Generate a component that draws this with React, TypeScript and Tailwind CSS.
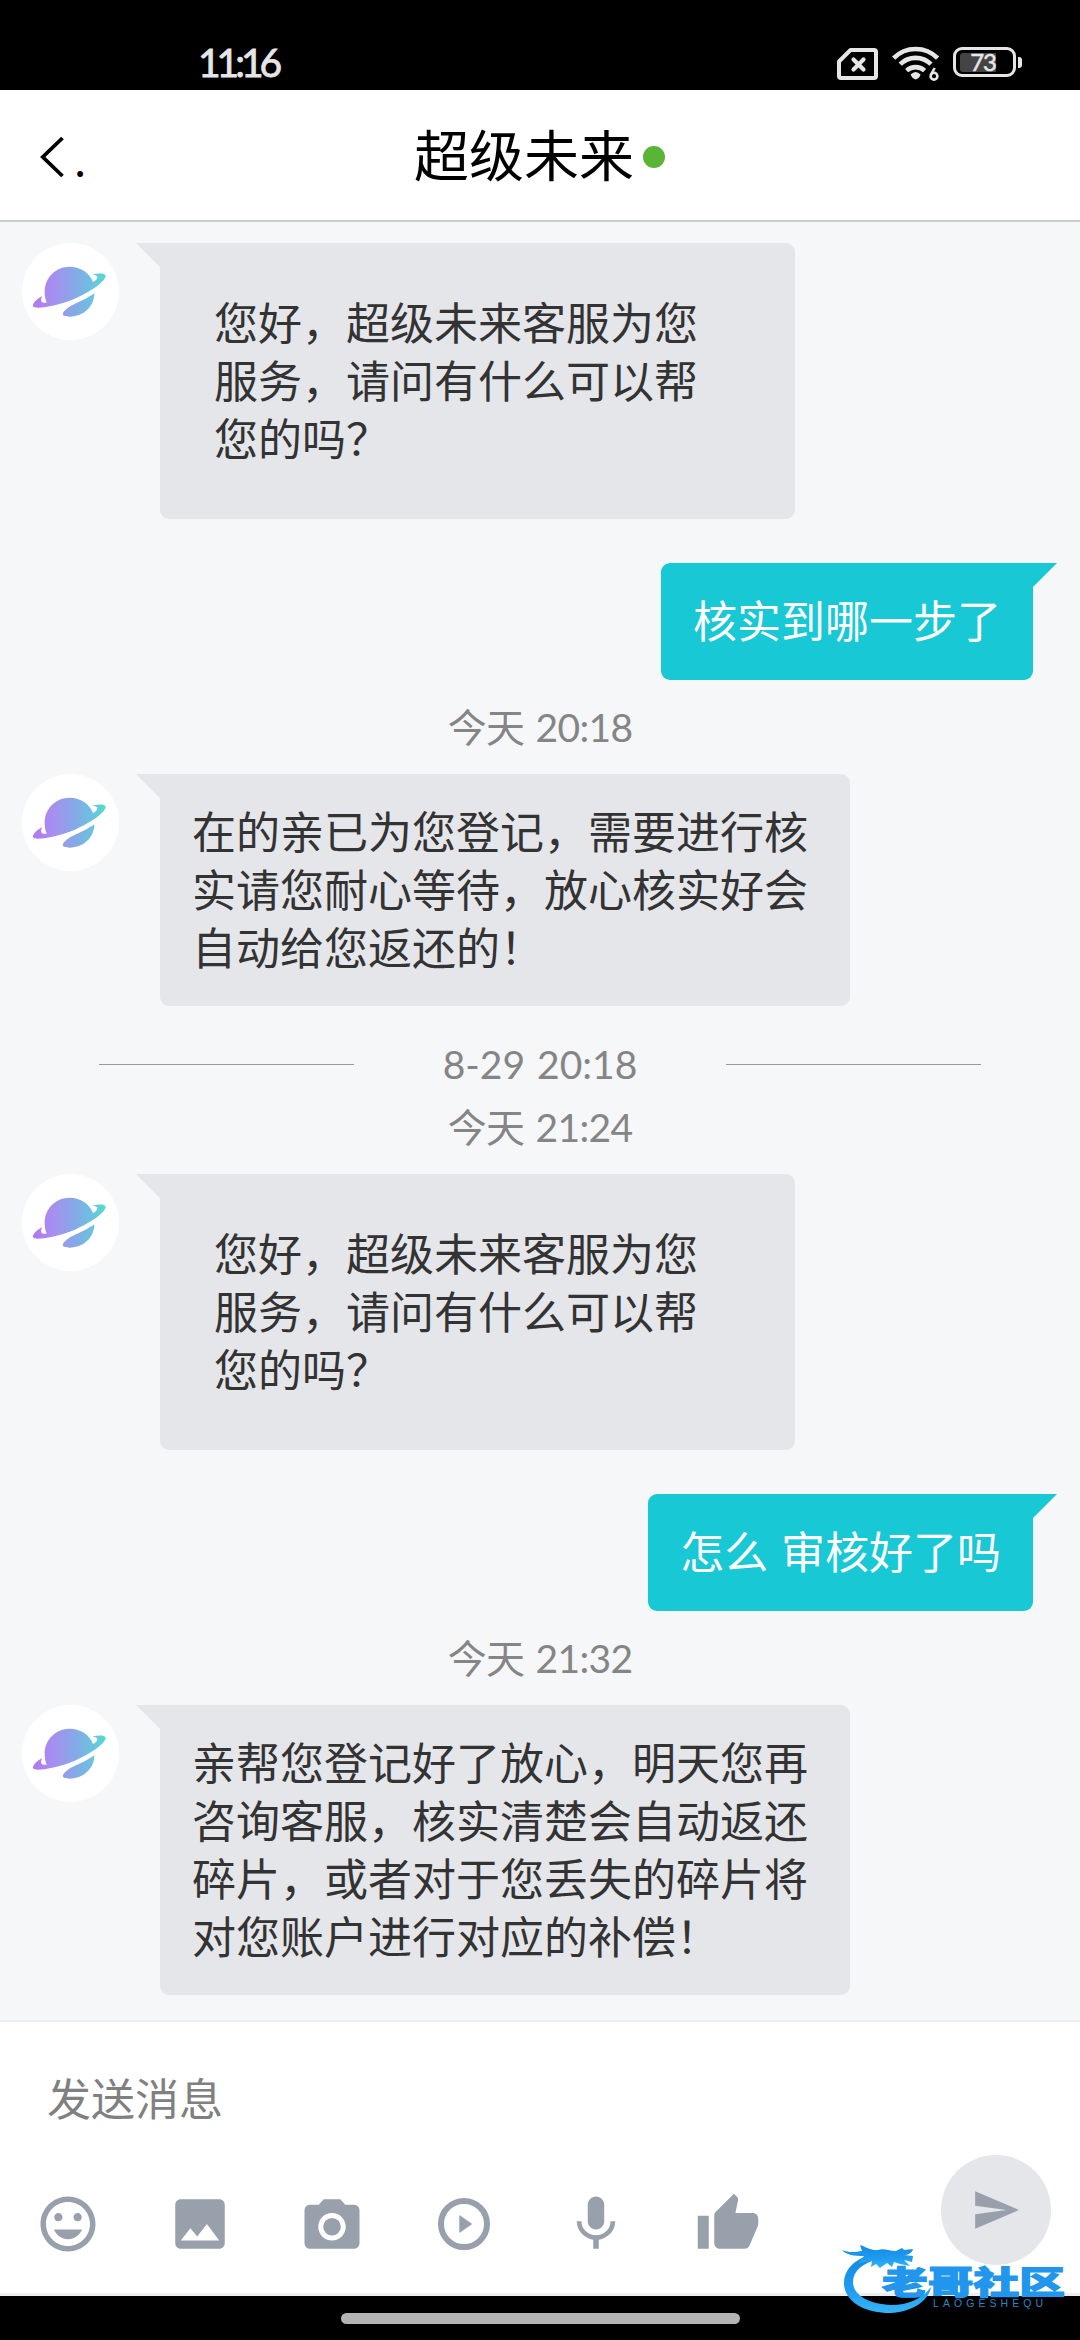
import clsx from "clsx";
import { MdImage, MdInsertEmoticon, MdThumbUp } from "react-icons/md";

type Message = {
  type: "received" | "sent" | "time" | "divider";
  lines: string[];
  welcome?: boolean;
};

const messages: Message[] = [
  { type: "received", lines: ["您好，超级未来客服为您", "服务，请问有什么可以帮", "您的吗？"], welcome: true },
  { type: "sent", lines: ["核实到哪一步了"] },
  { type: "time", lines: ["今天 20:18"] },
  { type: "received", lines: ["在的亲已为您登记，需要进行核", "实请您耐心等待，放心核实好会", "自动给您返还的！"] },
  { type: "divider", lines: ["8-29 20:18"] },
  { type: "time", lines: ["今天 21:24"] },
  { type: "received", lines: ["您好，超级未来客服为您", "服务，请问有什么可以帮", "您的吗？"], welcome: true },
  { type: "sent", lines: ["怎么 审核好了吗"] },
  { type: "time", lines: ["今天 21:32"] },
  { type: "received", lines: ["亲帮您登记好了放心，明天您再", "咨询客服，核实清楚会自动返还", "碎片，或者对于您丢失的碎片将", "对您账户进行对应的补偿！"] },
];

function StatusBar() {
  return (
    <div className="flex h-[90px] shrink-0 items-start justify-between bg-black pl-[198px] pr-[58px] text-[#e6e6e6]">
      <span className="mt-[38px] font-['Lato','Noto_Sans_CJK_SC',sans-serif] text-[39px] leading-[48px] tracking-[-4px] [-webkit-text-stroke:0.8px_#e6e6e6]">11:16</span>
      <div className="mt-[44px] flex items-start">
        <svg className="mt-[4px] h-[32px] w-[41px]" viewBox="0 0 41 32" fill="none" stroke="currentColor">
          <path d="M13.5 2H37Q39 2 39 4V28Q39 30 37 30H4Q2 30 2 28V13.5Z" strokeWidth="4" strokeLinejoin="round" />
          <path d="M16.5 11.5L26.5 21.5M26.5 11.5L16.5 21.5" strokeWidth="4.2" strokeLinecap="round" />
        </svg>
        <svg className="ml-[14px] h-[40px] w-[48px]" viewBox="0 0 48 40" fill="none" stroke="currentColor" strokeWidth="4.6">
          <path d="M1.6 14.2A31 31 0 0 1 45.6 14.2" />
          <path d="M8.2 20.2A22 22 0 0 1 39 20.2" />
          <path d="M14.6 26.6A13.5 13.5 0 0 1 32.6 26.6" />
          <path d="M18.6 30.6Q23.6 25.6 28.6 30.6Q27 35 23.6 35.4Q20.4 35 18.6 30.6Z" fill="currentColor" stroke="none" />
          <circle cx="42" cy="32" r="7" fill="#000" stroke="none" />
          <circle cx="42" cy="32.2" r="3.4" strokeWidth="2.6" />
          <path d="M38.8 31L42.6 24" strokeWidth="2.6" />
        </svg>
        <div className="mt-[3px] ml-[13px] flex items-center">
          <div className="flex h-[30px] w-[63px] items-center rounded-[9px] border-3 border-[#e6e6e6] pl-[4px]">
            <div className="flex h-[19px] w-[36px] items-center justify-end rounded-l-[3px] bg-[#444]">
              <span className="font-['Lato','Noto_Sans_CJK_SC',sans-serif] text-[24px] leading-none tracking-[-1px] [-webkit-text-stroke:0.5px_#e6e6e6]">73</span>
            </div>
          </div>
          <div className="ml-[2px] h-[11px] w-[4px] rounded-r-[3px] bg-[#e6e6e6]" />
        </div>
      </div>
    </div>
  );
}

function Header() {
  return (
    <div className="flex h-[132px] shrink-0 items-center justify-between border-b-2 border-[#cccdcf] bg-white px-[40px] text-black">
      <div className="flex w-[200px] items-center">
        <svg className="mt-[3px] h-[42px] w-[24px]" viewBox="0 0 24 42" fill="none" stroke="currentColor" strokeWidth="3.8">
          <path d="M22.5 2L2.8 21L22.5 40" />
        </svg>
        <span className="ml-[10px] mt-[4px] text-[44px] leading-none">.</span>
      </div>
      <div className="flex items-center">
        <h1 className="-mt-[5px] text-[55px] leading-none">超级未来</h1>
        <div className="ml-[9px] mt-[3px] size-[22px] rounded-full bg-[#5ab435]" />
      </div>
      <div className="w-[201px]" />
    </div>
  );
}

function Avatar() {
  return (
    <div className="size-[97px] rounded-full bg-white">
      <svg className="size-full" viewBox="7 22 291 291">
        <defs>
          <linearGradient id="planet" gradientUnits="userSpaceOnUse" x1="40" y1="0" x2="258" y2="0">
            <stop offset="0" stopColor="#b576ee" />
            <stop offset="0.25" stopColor="#a98df0" />
            <stop offset="0.6" stopColor="#82abe6" />
            <stop offset="0.85" stopColor="#67c6de" />
            <stop offset="1" stopColor="#55dccb" />
          </linearGradient>
        </defs>
        <g fill="url(#planet)">
          <path d="M68 181C50 190 38 204 40 212C46 222 104 212 150 195C205 174 258 138 258 120C256 111 235 113 219 116C222 119 232 119 233 124C233 131 226 137 220 139C210 112 183 93 150 93C108 93 75 126 75 168C75 180 77 192 81 201C70 203 58 200 68 181Z" />
          <path d="M224 173C224 212 192 243 150 243C136 243 127 239 130 232C138 218 157 208 176 200C196 191 214 180 224 173Z" />
        </g>
      </svg>
    </div>
  );
}

function ReceivedMessage({ lines, welcome }: { lines: string[]; welcome?: boolean }) {
  return (
    <div className="flex items-start pl-[22px]">
      <Avatar />
      <div className="ml-[17px] h-[25px] w-[25px] bg-[#e5e6ea] [clip-path:polygon(0_0,100%_0,100%_100%)]" />
      <div
        className={clsx(
          "-ml-px rounded-[9px] rounded-tl-none bg-[#e5e6ea] text-[44px] leading-[58px] whitespace-nowrap text-[#333]",
          welcome ? "w-[635px] px-[54px] pt-[49px] pb-[53px]" : "w-[690px] px-[32px] pt-[27px] pb-[31px]"
        )}
      >
        {lines.map((line) => (
          <p key={line}>{line}</p>
        ))}
      </div>
    </div>
  );
}

function SentMessage({ lines }: { lines: string[] }) {
  return (
    <div className="flex items-start justify-end pt-[44px] pr-[23px]">
      <div className="h-[117px] rounded-[9px] rounded-tr-none bg-[#18c8d4] px-[32px] pt-[27px] text-[44px] leading-[58px] whitespace-nowrap text-white [word-spacing:3px]">
        {lines[0]}
      </div>
      <div className="-ml-px h-[25px] w-[25px] bg-[#18c8d4] [clip-path:polygon(0_0,100%_0,0_100%)]" />
    </div>
  );
}

function Time({ text }: { text: string }) {
  return (
    <div className="flex h-[94px] items-center justify-center font-['Lato','Noto_Sans_CJK_SC',sans-serif] text-[39px] leading-none tracking-[-0.7px] text-[#858585] [word-spacing:2px]">
      {text}
    </div>
  );
}

function Divider({ text }: { text: string }) {
  return (
    <div className="flex h-[74px] items-center justify-between px-[99px] pt-[43px] text-[#858585]">
      <div className="h-px w-[255px] bg-[#999]" />
      <span className="font-['Lato','Noto_Sans_CJK_SC',sans-serif] text-[39px] leading-none [word-spacing:2px]">{text}</span>
      <div className="h-px w-[255px] bg-[#999]" />
    </div>
  );
}

function Composer() {
  return (
    <div className="flex h-[276px] shrink-0 flex-col border-t-2 border-b-3 border-[#eee] bg-white">
      <div className="mt-[46px] pl-[47px] text-[44px] leading-[58px] text-[#808080]">发送消息</div>
      <div className="mt-[29px] flex items-start justify-between pl-[35px] pr-[29px]">
        <div className="mt-[36px] flex gap-[66px] text-[#98a0ac]">
          <MdInsertEmoticon className="size-[66px]" />
          <MdImage className="size-[66px]" />
          <svg className="size-[66px]" viewBox="0 -1 24 24" fill="currentColor">
            <circle cx="12" cy="12" r="3.2" />
            <path d="M9 2L7.17 4H4c-1.1 0-2 .9-2 2v12c0 1.1.9 2 2 2h16c1.1 0 2-.9 2-2V6c0-1.1-.9-2-2-2h-3.170L15 2H9zm3 15c-2.760 0-5-2.240-5-5s2.240-5 5-5 5 2.240 5 5-2.240 5-5 5z" />
          </svg>
          <svg className="size-[66px]" viewBox="0 0 66 66" fill="none">
            <circle cx="33" cy="33" r="23" stroke="currentColor" strokeWidth="6" />
            <path d="M28.300 24V42L41.300 33Z" fill="currentColor" />
          </svg>
          <svg className="size-[66px]" viewBox="0 0 24 24" fill="currentColor">
            <path d="M12 14c1.660 0 2.990-1.340 2.990-3L15 5c0-1.660-1.340-3-3-3S9 3.340 9 5v6c0 1.660 1.340 3 3 3zm5.300-3c0 3-2.540 5.100-5.300 5.100S6.700 14 6.700 11H5c0 3.410 2.720 6.230 6 6.720V21h2v-3.280c3.280-.48 6-3.300 6-6.720h-1.700z" />
          </svg>
          <MdThumbUp className="size-[66px]" />
        </div>
        <div className="flex size-[110px] items-center justify-center rounded-full bg-[#e5e6ea]">
          <svg className="size-[50px] text-[#98a0ac]" viewBox="0 0 24 24" fill="currentColor">
            <path d="M2.010 21L23 12 2.010 3 2 10l15 2-15 2z" />
          </svg>
        </div>
      </div>
    </div>
  );
}

function Watermark() {
  return (
    <svg className="absolute right-[12px] bottom-[22px] h-[80px] w-[230px]" viewBox="0 0 230 80">
      <defs>
        <linearGradient id="mark" x1="0" y1="0" x2="0" y2="1">
          <stop offset="0" stopColor="#1188e6" />
          <stop offset="0.6" stopColor="#1f9cf0" />
          <stop offset="1" stopColor="#35b6f7" />
        </linearGradient>
      </defs>
      <g fill="url(#mark)">
        <path d="M32 17C14 22 5 34 6 47C8 65 28 75 52 75C74 74 91 63 93 49C84 61 70 67 53 67C31 66 15 57 15 44C15 33 25 25 38 22Z" />
        <path d="M4 12C12 15 17 14 24 13L22 7C28 9 34 13 40 12C46 10 50 13 58 13L64 10L66 12L75 11C74 15 70 17 66 17L75 18L74 24L66 22L72 28L62 26L56 24L54 29L49 25L42 30L38 26L33 29L34 23L20 25L26 18C16 18 8 17 4 12Z" />
      </g>
      <text x="44" y="56" textLength="183" lengthAdjust="spacingAndGlyphs" fontSize="32" fontWeight="900" fill="#2196ec" stroke="#2196ec" strokeWidth="1.2" className="font-['Noto_Sans_CJK_SC',sans-serif]">
        老哥社区
      </text>
      <text x="95" y="69" textLength="110" fontSize="10.5" fill="#2a85c8" className="font-['Liberation_Sans',sans-serif]">
        LAOGESHEQU
      </text>
    </svg>
  );
}

export default function App() {
  return (
    <div className="relative flex h-[2340px] w-[1080px] flex-col overflow-hidden bg-[#f5f7f9] font-['Noto_Sans_CJK_SC',sans-serif]">
      <StatusBar />
      <Header />
      <main className="flex flex-1 flex-col pt-[21px]">
        {messages.map((message, i) => {
          if (message.type === "received") {
            return <ReceivedMessage key={i} lines={message.lines} welcome={message.welcome} />;
          }
          if (message.type === "sent") {
            return <SentMessage key={i} lines={message.lines} />;
          }
          if (message.type === "divider") {
            return <Divider key={i} text={message.lines[0]} />;
          }
          return <Time key={i} text={message.lines[0]} />;
        })}
      </main>
      <Composer />
      <div className="flex h-[44px] shrink-0 items-start justify-center bg-black pt-[17px]">
        <div className="h-[11px] w-[399px] rounded-full bg-[#b3b3b3]" />
      </div>
      <Watermark />
    </div>
  );
}
